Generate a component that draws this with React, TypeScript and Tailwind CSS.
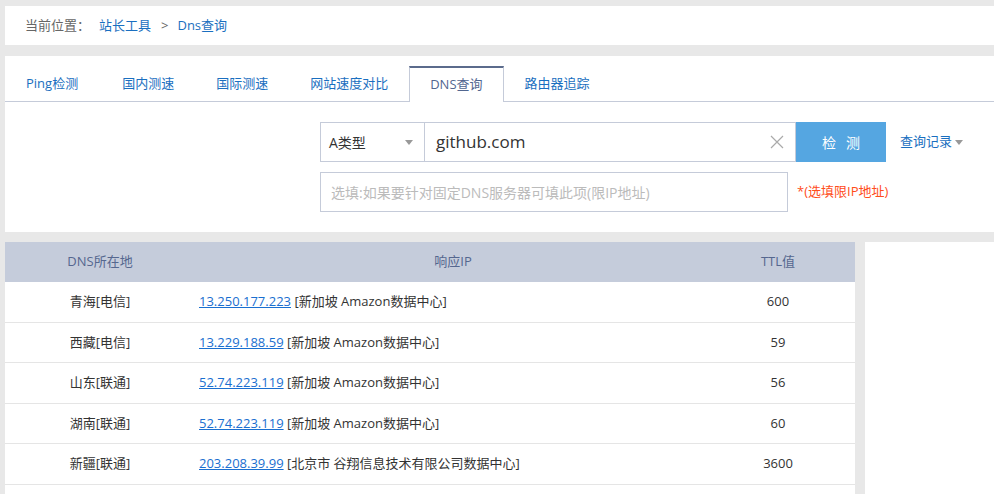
const tabs = ['Ping检测', '国内测速', '国际测速', '网站速度对比', 'DNS查询', '路由器追踪'];

const rows = [
  { loc: '青海[电信]', ip: '13.250.177.223', info: '[新加坡 Amazon数据中心]', ttl: '600' },
  { loc: '西藏[电信]', ip: '13.229.188.59', info: '[新加坡 Amazon数据中心]', ttl: '59' },
  { loc: '山东[联通]', ip: '52.74.223.119', info: '[新加坡 Amazon数据中心]', ttl: '56' },
  { loc: '湖南[联通]', ip: '52.74.223.119', info: '[新加坡 Amazon数据中心]', ttl: '60' },
  { loc: '新疆[联通]', ip: '203.208.39.99', info: '[北京市 谷翔信息技术有限公司数据中心]', ttl: '3600' },
];

const Caret = () => (
  <svg width="8" height="5" viewBox="0 0 8 5" className="fill-[#999]">
    <path d="M0 0h8L4 5z" />
  </svg>
);

export default function App() {
  return (
    <div className="min-h-[494px] bg-[#e8e8e8] pl-[5px] pt-[6px] text-[13px] text-[#333] font-['Open_Sans','Noto_Sans_CJK_SC',sans-serif]">
      {/* breadcrumb */}
      <div className="flex h-[39px] items-center bg-white pl-[20px]">
        <span className="text-[#666]">当前位置：</span>
        <a className="ml-[9px] text-[#1a6fc0]">站长工具</a>
        <span className="ml-[10px] mr-[9px] text-[#666]">&gt;</span>
        <a className="text-[#1a6fc0]">Dns查询</a>
      </div>

      {/* tool panel */}
      <div className="mt-[11px] bg-white pt-[10px] pb-[20px]">
        <div className="flex border-b border-[#c5cbd9]">
          {tabs.map((t, i) =>
            t === 'DNS查询' ? (
              <div
                key={t}
                className="-mb-px flex h-[36px] items-center border-x border-t-2 border-x-[#c5cbd9] border-t-[#5b6b8c] bg-white px-[20px] text-[#52668f]"
              >
                {t}
              </div>
            ) : (
              <div
                key={t}
                className={`flex h-[35px] items-center text-[#1a6fc0] ${i === 0 ? 'pl-[21px] pr-[23px]' : 'px-[21px]'}`}
              >
                {t}
              </div>
            )
          )}
        </div>

        <div className="ml-[315px] mt-[20px] flex flex-col gap-[10px]">
          <div className="flex items-center">
            <div className="flex h-[40px] w-[105px] items-center justify-between border border-[#c5cbd9] pl-[8px] pr-[11px] text-[14px]">
              <span>A类型</span>
              <Caret />
            </div>
            <div className="flex h-[40px] w-[371px] items-center justify-between border border-l-0 border-[#c5cbd9] pl-[11px] pr-[11px] text-[17px]">
              <span>github.com</span>
              <svg width="14" height="14" viewBox="0 0 14 14" className="stroke-[#aaa]" strokeWidth="1.2">
                <path d="M1 1l12 12M13 1L1 13" />
              </svg>
            </div>
            <button className="h-[40px] w-[90px] bg-[#55a6e1] text-[14px] tracking-[10px] text-white">
              <span className="ml-[10px]">检测</span>
            </button>
            <div className="ml-[14px] flex items-center gap-[3px] text-[#1a6fc0]">
              <span>查询记录</span>
              <Caret />
            </div>
          </div>
          <div className="flex items-center">
            <div className="flex h-[40px] w-[468px] items-center border border-[#c5cbd9] pl-[10px] text-[14px] text-[#bbb]">
              选填:如果要针对固定DNS服务器可填此项(限IP地址)
            </div>
            <span className="ml-[9px] text-[#ff4d1a]">*(选填限IP地址)</span>
          </div>
        </div>
      </div>

      {/* results */}
      <div className="mt-[10px] flex">
        <div className="w-[850px] bg-white">
          <div className="flex h-[40px] items-center bg-[#c5ccdb] text-[#55678f]">
            <div className="w-[190px] text-center">DNS所在地</div>
            <div className="w-[506px] pl-[10px] text-center">响应IP</div>
            <div className="flex-1 text-center">TTL值</div>
          </div>
          {rows.map((r, i) => (
            <div key={i} className="flex h-[40.5px] items-center border-b border-[#e5e5e5]">
              <div className="w-[190px] text-center">{r.loc}</div>
              <div className="w-[506px] pl-[4px]">
                <a className="text-[#1a6fd0] underline">{r.ip}</a> {r.info}
              </div>
              <div className="flex-1 text-center">{r.ttl}</div>
            </div>
          ))}
        </div>
        <div className="ml-[10px] flex-1 bg-white min-h-[252px]" />
      </div>
    </div>
  );
}
